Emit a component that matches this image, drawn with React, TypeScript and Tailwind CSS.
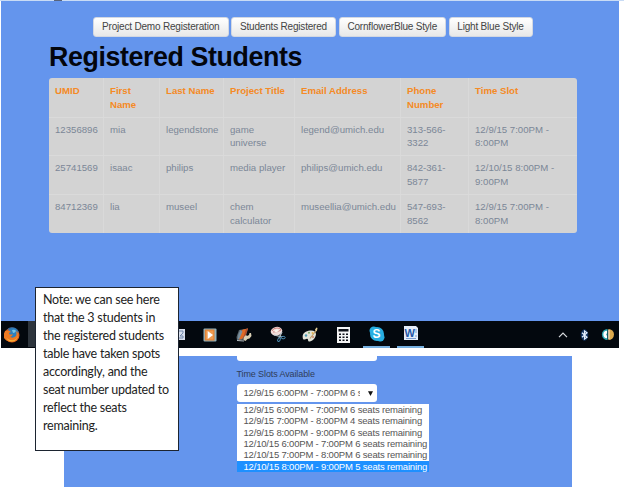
const navItems = [
  { label: 'Project Demo Registeration', width: 'w-[135.5px]' },
  { label: 'Students Registered', width: 'w-[105px]' },
  { label: 'CornflowerBlue Style', width: 'w-[107.5px]' },
  { label: 'Light Blue Style', width: 'w-[84px]' },
];

const headers = ['UMID', 'First Name', 'Last Name', 'Project Title', 'Email Address', 'Phone Number', 'Time Slot'];

const rows = [
  ['12356896', 'mia', 'legendstone', 'game universe', 'legend@umich.edu', '313-566-3322', '12/9/15 7:00PM - 8:00PM'],
  ['25741569', 'isaac', 'philips', 'media player', 'philips@umich.edu', '842-361-5877', '12/10/15 8:00PM - 9:00PM'],
  ['84712369', 'lia', 'museel', 'chem calculator', 'museellia@umich.edu', '547-693-8562', '12/9/15 7:00PM - 8:00PM'],
];

const slots = [
  '12/9/15 6:00PM - 7:00PM 6 seats remaining',
  '12/9/15 7:00PM - 8:00PM 4 seats remaining',
  '12/9/15 8:00PM - 9:00PM 6 seats remaining',
  '12/10/15 6:00PM - 7:00PM 6 seats remaining',
  '12/10/15 7:00PM - 8:00PM 6 seats remaining',
  '12/10/15 8:00PM - 9:00PM 5 seats remaining',
];

const noteLines = [
  'Note: we can see here',
  'that the 3 students in',
  'the registered students',
  'table have taken spots',
  'accordingly, and the',
  'seat number updated to',
  'reflect the seats',
  'remaining.',
];

function StudentsTable() {
  return (
    <div className="ml-12 mt-[5px] h-[155px] w-[528px] overflow-hidden rounded-[3px] bg-[#d3d3d3] text-[9.65px] leading-[13.6px]">
      <div className="grid h-[38.5px] grid-cols-[55px_56px_64px_71px_106px_68px_108px] font-bold text-[#f58a25]">
        {headers.map((h) => (
          <div key={h} className="border-r border-[#d9d9d9] pl-1.5 pr-1 pt-[6px] last:border-r-0">{h}</div>
        ))}
      </div>
      {rows.map((r) => (
        <div key={r[0]} className="grid h-[38.8px] grid-cols-[55px_56px_64px_71px_106px_68px_108px] border-t border-[#dadada] text-[#7b8797]">
          {r.map((c, i) => (
            <div key={i} className="border-r border-[#d9d9d9] pl-1.5 pt-[5px] last:border-r-0 last:pr-4 nth-4:pr-1.5 nth-6:pr-1.5">{c}</div>
          ))}
        </div>
      ))}
    </div>
  );
}

function Firefox() {
  return (
    <svg width="16" height="16" viewBox="0 0 16 16">
      <circle cx="8" cy="8" r="7.5" fill="#e4611c" />
      <path d="M3 2.5A7 7 0 0 1 15 6q-2-3-5-3z" fill="#2a68a8" />
      <circle cx="8.8" cy="6" r="5" fill="#2f7fbd" />
      <path d="M8 3q3-1 4 1-1 2-3 2z" fill="#75c3e6" />
      <path d="M1 4q1-1 2 0 2-1 4 1-2 0-2 2 2 1 4 0-1 3-3 3 3 2 6-1 1-2 0-5 3 2 2 6-2 5-7 5-6-1-8-6z" fill="#ee7a22" />
      <path d="M2 10q3 4 8 3 3-1 4-4-1 5-6 5.5-4 0-6-4.5z" fill="#f9b53a" />
    </svg>
  );
}

function MediaPlayer() {
  return (
    <svg width="14" height="14" viewBox="0 0 14 14">
      <rect x=".5" y=".5" width="13" height="13" rx="1" fill="#91b2bd" />
      <rect x="1.8" y="1.5" width="9.7" height="11" fill="#df7e31" />
      <rect x="2.8" y="2.5" width="7.7" height="9" fill="#ef9a4e" />
      <path d="M4.7 3 10 7l-5.3 4z" fill="#fff" />
    </svg>
  );
}

function MovieTool() {
  return (
    <svg width="16" height="14" viewBox="0 0 16 14">
      <path d="m.5 9 2.5-7 9-1.5-3 11-8 1z" fill="#59656d" />
      <path d="m4 4 3-2.5 5-1-3 6-3 4.5-3 .5z" fill="#e06a24" />
      <path d="m2.5 6 2-4 2 1.5-3 7-2 1z" fill="#7890a0" />
      <path d="m10 1 2-.5-3 9-2 1z" fill="#b34d2b" />
      <path d="m8 9 2-2 1 1 2-1 .5-2 1.5 0 .5 3-2 2.5-2 .5-2 2-2-1z" fill="#d9cfb4" />
      <path d="m1 12.5 7 .5" stroke="#b7bec2" />
    </svg>
  );
}

function SnippingTool() {
  return (
    <svg width="16" height="17" viewBox="0 0 16 17">
      <ellipse cx="6.5" cy="5.2" rx="5.8" ry="4.3" fill="#efdcd8" transform="rotate(-10 6.5 5.2)" />
      <path d="M2 5q1-3 5-3 4 0 4 2-2 2-8 2" fill="none" stroke="#c97773" strokeWidth=".9" />
      <path d="m4 5 3-2 2 2-3 1.5z" fill="#f8f3eb" />
      <path d="m4 9 8 2M12 6l-3 6" stroke="#b9c5cc" strokeWidth="1.2" />
      <ellipse cx="13.2" cy="11.6" rx="2" ry="1.2" fill="none" stroke="#4e91b9" />
      <ellipse cx="9" cy="13.6" rx="1.2" ry="2" fill="none" stroke="#4e91b9" transform="rotate(25 9 13.6)" />
    </svg>
  );
}

function Paint() {
  return (
    <svg width="17" height="16" viewBox="0 0 17 16">
      <path d="M1 12C-.5 7 3 4 8 3.5q6-.5 6 4-1 5.5-6 7-2 .5-2-1.5t-2-1-3 0z" fill="#e2e3d8" />
      <circle cx="4" cy="8.5" r="1.2" fill="#4e9db5" />
      <circle cx="7" cy="5.8" r="1" fill="#7aa564" />
      <circle cx="10.5" cy="6" r="1" fill="#e8b44f" />
      <circle cx="11" cy="10" r="1" fill="#c98470" />
      <path d="m8 11.5 6.5-8.5" stroke="#c29b60" strokeWidth="1.1" />
      <path d="m13 2.5 1.5-2 1 .5-.5 2.5-1 1z" fill="#e4cf95" />
    </svg>
  );
}

function Calculator() {
  return (
    <svg width="13" height="16" viewBox="0 0 13 16">
      <path fill="#f5f5f5" d="M0 0h13v16H0z" />
      <path fill="#10131a" d="M1.5 2h10v2.5h-10zM2 6.5h2V8H2zM5.5 6.5h2V8h-2zM9 6.5h2V8H9zM2 9.5h2V11H2zM5.5 9.5h2V11h-2zM9 9.5h2V11H9zM2 12.5h2V14H2zM5.5 12.5h2V14h-2zM9 12.5h2V14H9z" />
    </svg>
  );
}

function Skype() {
  return (
    <div className="relative h-4 w-4 text-center text-[12px] font-bold leading-[16px] text-white">
      <svg className="absolute inset-0" width="16" height="16" viewBox="0 0 16 16">
        <circle cx="8" cy="8" r="7" fill="#27aee2" />
        <circle cx="4.7" cy="4.7" r="4.2" fill="#27aee2" />
        <circle cx="11.3" cy="11.3" r="4.2" fill="#27aee2" />
      </svg>
      <span className="relative">S</span>
    </div>
  );
}

function Word() {
  return (
    <div className="relative h-[15px] w-4">
      <svg className="absolute inset-0" width="16" height="15" viewBox="0 0 16 15">
        <path d="M1 0h12l2 2v12H1z" fill="#e5edf8" />
        <path d="M12 4h2M12 6h2M12 10h2M3 12.5h10" stroke="#7d9ed1" />
      </svg>
      <span className="relative block pl-[2px] text-[11px] font-bold leading-[14px] text-[#2457a6]">W</span>
    </div>
  );
}

function Taskbar() {
  return (
    <div className="ml-px flex h-[27px] w-[618px] items-center bg-[#03080e]">
      <div className="ml-[3px]"><Firefox /></div>
      <div className="ml-2 h-[26px] w-[7px] self-start bg-[#2d343c]" />
      <div className="ml-[142px]">
        <svg width="9" height="12" viewBox="0 0 9 12">
          <path d="M0 0h8v11H0z" fill="#d8dfed" />
          <path d="M1 2h5v2L3 7h3v2H1" fill="none" stroke="#7288ab" />
        </svg>
      </div>
      <div className="ml-[17px]"><MediaPlayer /></div>
      <div className="ml-[18.5px]"><MovieTool /></div>
      <div className="ml-[18px]"><SnippingTool /></div>
      <div className="ml-4"><Paint /></div>
      <div className="ml-[18.5px]"><Calculator /></div>
      <div className="ml-[13px] flex h-[27px] w-[27px] items-center justify-center border-b-2 border-[#76b0e0]"><Skype /></div>
      <div className="ml-[7px] flex h-[27px] w-[27px] items-center justify-center border-b-2 border-[#76b0e0]"><Word /></div>
      <svg className="ml-[134px]" width="10" height="6" viewBox="0 0 10 6">
        <path d="M1 5.2 5 1.2l4 4" fill="none" stroke="#dadde0" strokeWidth="1.2" />
      </svg>
      <svg className="ml-[12px]" width="9" height="12" viewBox="0 0 9 12">
        <ellipse cx="4.5" cy="6" rx="3.8" ry="5.7" fill="#0e2f5c" />
        <path d="m2 3.7 5 4.5L4.5 10V2L7 3.8 2 8.3" fill="none" stroke="#e4f0ff" strokeWidth="1.2" />
      </svg>
      <svg className="ml-[12px]" width="13" height="13" viewBox="0 0 14 14">
        <path d="M7 1a6 6 0 0 0 0 12z" fill="#2baab6" />
        <path d="M8 1a6 6 0 0 1 0 12z" fill="#dca94c" />
        <path d="M6.5 3a4 4 0 0 0 0 8V8.5Q4.500 7 6.5 5.5zM8 2h1v10H8z" fill="#fff" />
      </svg>
    </div>
  );
}

function SlotForm() {
  return (
    <div className="ml-[63.5px] mt-2 h-[131px] w-[508px] bg-[#6495ed] pl-[173px]">
      <div className="flex h-[5px] w-[140px] justify-start rounded-b-[3px] bg-white" />
      <div className="mt-[8px] h-[11px] text-[9px] leading-[11px] tracking-[-0.11px] text-[#303d59]">Time Slots Available</div>
      <div className="mt-1 flex h-[18px] w-[140px] items-center rounded-[3px] bg-white pl-[7px] text-[9.5px] tracking-[-0.18px] text-[#555]">
        <span className="w-[116px] overflow-hidden whitespace-nowrap">12/9/15 6:00PM - 7:00PM 6 s</span>
        <svg className="ml-[8px]" width="5" height="5" viewBox="0 0 5 5"><path d="M0 .3h5L2.5 5z" fill="#111" /></svg>
      </div>
      <div className="mt-[2px] w-[192px] bg-white text-[9.5px] leading-[11.35px] tracking-[-0.18px] text-[#555]">
        {slots.map((s, i) => (
          <div key={s} className={i === 5 ? 'h-[11.35px] whitespace-nowrap bg-[#1e90ff] pl-[7px] text-white' : 'h-[11.35px] whitespace-nowrap pl-[7px]'}>{s}</div>
        ))}
      </div>
    </div>
  );
}

export default function App() {
  return (
    <div className="relative h-[498px] w-[624px] overflow-hidden bg-white font-['Liberation_Sans',Arial,sans-serif]">
      <div className="flex h-px bg-[#c9dcf5]"><div className="ml-[54px] w-2 bg-[#58647c]" /></div>
      <div className="ml-px h-[320px] w-[618px] bg-[#6495ed] pt-4">
        <nav className="flex gap-[2.5px] pl-[92px]">
          {navItems.map((n) => (
            <button key={n.label} className={`${n.width} h-5 whitespace-nowrap rounded-[3px] border border-[#d3d8e2] bg-linear-to-b from-white to-[#e8e8e8] text-center text-[10px] leading-[18px] tracking-[-0.19px] text-[#444]`}>
              {n.label}
            </button>
          ))}
        </nav>
        <h1 className="ml-12 mt-[5px] h-[31px] text-[26.8px] font-bold leading-[31px] tracking-[-0.4px] text-[#03060d]">Registered Students</h1>
        <StudentsTable />
      </div>
      <Taskbar />
      <SlotForm />
      <aside className="absolute left-[35px] top-[287px] h-[164px] w-[144px] border border-[#1c2430] bg-white pl-[7px] pt-[2.5px] font-[Lato,sans-serif] text-[12.5px] leading-[18.05px] tracking-[-0.24px] text-[#222]">
        {noteLines.map((l) => (
          <div key={l} className="whitespace-nowrap">{l}</div>
        ))}
      </aside>
    </div>
  );
}
